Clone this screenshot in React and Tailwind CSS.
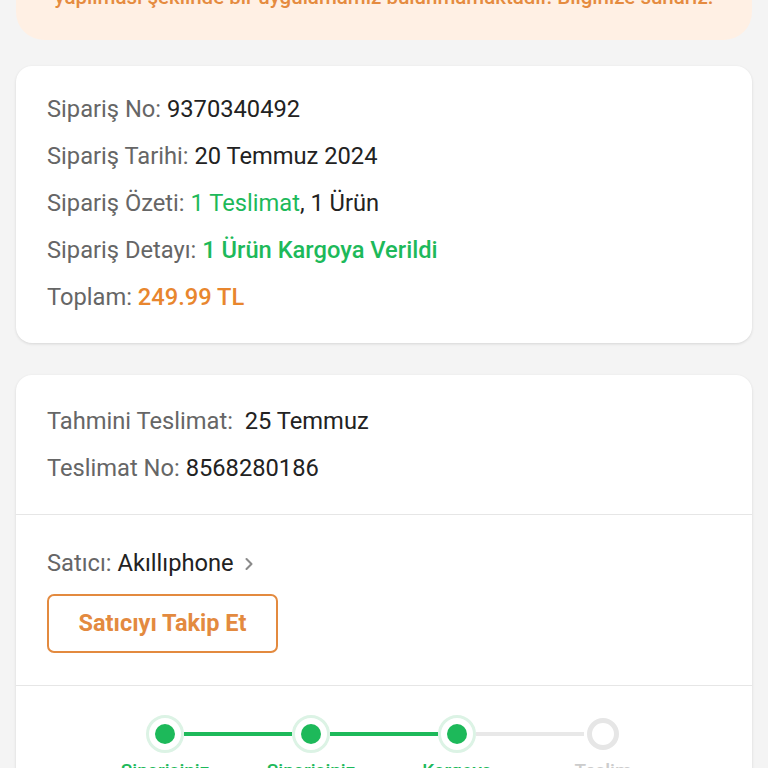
import React from 'react';
import { ChevronRight } from 'lucide-react';

const font = { fontFamily: 'Roboto, "Noto Sans", sans-serif' };

const Row = ({ label, children }) => (
  <p className="leading-[47px] text-[23.7px] text-[#666666]">
    {label} <span className="text-[#222222]">{children}</span>
  </p>
);

const steps = [
  { top: 'Siparişiniz', bottom: 'Alındı', done: true },
  { top: 'Siparişiniz', bottom: 'Hazırlanıyor', done: true },
  { top: 'Kargoya', bottom: 'Verildi', done: true },
  { top: 'Teslim', bottom: 'Edildi', done: false },
];

const StepDot = ({ done }) =>
  done ? (
    <div className="w-[38px] h-[38px] rounded-full border-[3px] border-[#dcf3e5] bg-white flex items-center justify-center shrink-0">
      <div className="w-[20px] h-[20px] rounded-full bg-[#1db95a]" />
    </div>
  ) : (
    <div className="w-[38px] h-[38px] flex items-center justify-center shrink-0">
      <div className="w-[32px] h-[32px] rounded-full border-[5px] border-[#e6e6e6]" />
    </div>
  );

const Stepper = () => (
  <div className="pt-[29px] pb-6">
    <div className="flex items-center w-[476px] mx-auto">
      <StepDot done />
      <div className="flex-1 h-[4px] bg-[#1db95a]" />
      <StepDot done />
      <div className="flex-1 h-[4px] bg-[#1db95a]" />
      <StepDot done />
      <div className="flex-1 h-[4px] bg-[#e8e8e8]" />
      <StepDot done={false} />
    </div>
    <div className="grid grid-cols-4 w-[584px] mx-auto mt-[6px]">
      {steps.map((s, i) => (
        <p
          key={i}
          className={`text-center text-[19px] leading-[24px] font-medium ${s.done ? 'text-[#1db95a]' : 'text-[#cccccc]'}`}
        >
          {s.top}
          <br />
          {s.bottom}
        </p>
      ))}
    </div>
  </div>
);

export default function App() {
  return (
    <div className="min-h-screen bg-[#f4f4f4] px-4 overflow-hidden" style={font}>
      <div className="-mt-[60px] bg-[#fff0e4] rounded-b-[28px] px-[24px] h-[100px] flex flex-col justify-end pb-[30px]">
        <p className="text-[#e58b3f] text-[20.5px] leading-[26px] font-medium text-center whitespace-nowrap">
          Siparişleriniz için telefon veya e-posta yoluyla ödeme talebinde bulunulması ya da işlem
          <br />
          yapılması şeklinde bir uygulamamız bulunmamaktadır. Bilginize sunarız.
        </p>
      </div>

      <div className="mt-[26px] bg-white rounded-[16px] shadow-[0_1px_3px_rgba(0,0,0,0.12)] px-[31px] pt-[20px] pb-[22px]">
        <Row label="Sipariş No:">9370340492</Row>
        <Row label="Sipariş Tarihi:">20 Temmuz 2024</Row>
        <p className="leading-[47px] text-[23.7px] text-[#666666]">
          Sipariş Özeti: <span className="text-[#1db95a]">1 Teslimat</span>
          <span className="text-[#222222]">, 1 Ürün</span>
        </p>
        <p className="leading-[47px] text-[23.7px] text-[#666666]">
          Sipariş Detayı: <span className="text-[#1db95a] font-medium">1 Ürün Kargoya Verildi</span>
        </p>
        <p className="leading-[47px] text-[23.7px] text-[#666666]">
          Toplam: <span className="text-[#e8862e] font-medium">249.99 TL</span>
        </p>
      </div>

      <div className="mt-[32px] bg-white rounded-[16px] shadow-[0_1px_3px_rgba(0,0,0,0.12)]">
        <div className="px-[31px] pt-[23px] pb-[22px] border-b border-[#e6e6e6]">
          <Row label={'Tahmini Teslimat:\u00a0'}>25 Temmuz</Row>
          <Row label="Teslimat No:">8568280186</Row>
        </div>
        <div className="px-[31px] pt-[25px] pb-[32px] border-b border-[#e6e6e6]">
          <div className="flex items-center h-[47px] text-[23.7px] text-[#666666]">
            <span>Satıcı:&nbsp;</span>
            <span className="text-[#222222]">Akıllıphone</span>
            <ChevronRight size={20} strokeWidth={2.5} className="text-[#8a8a8a] ml-[5px]" />
          </div>
          <button className="mt-[7px] w-[231px] h-[59px] border-2 border-[#e38a3f] rounded-[7px] text-[#e38a3f] text-[23.5px] font-bold">
            Satıcıyı Takip Et
          </button>
        </div>
        <Stepper />
      </div>
    </div>
  );
}
